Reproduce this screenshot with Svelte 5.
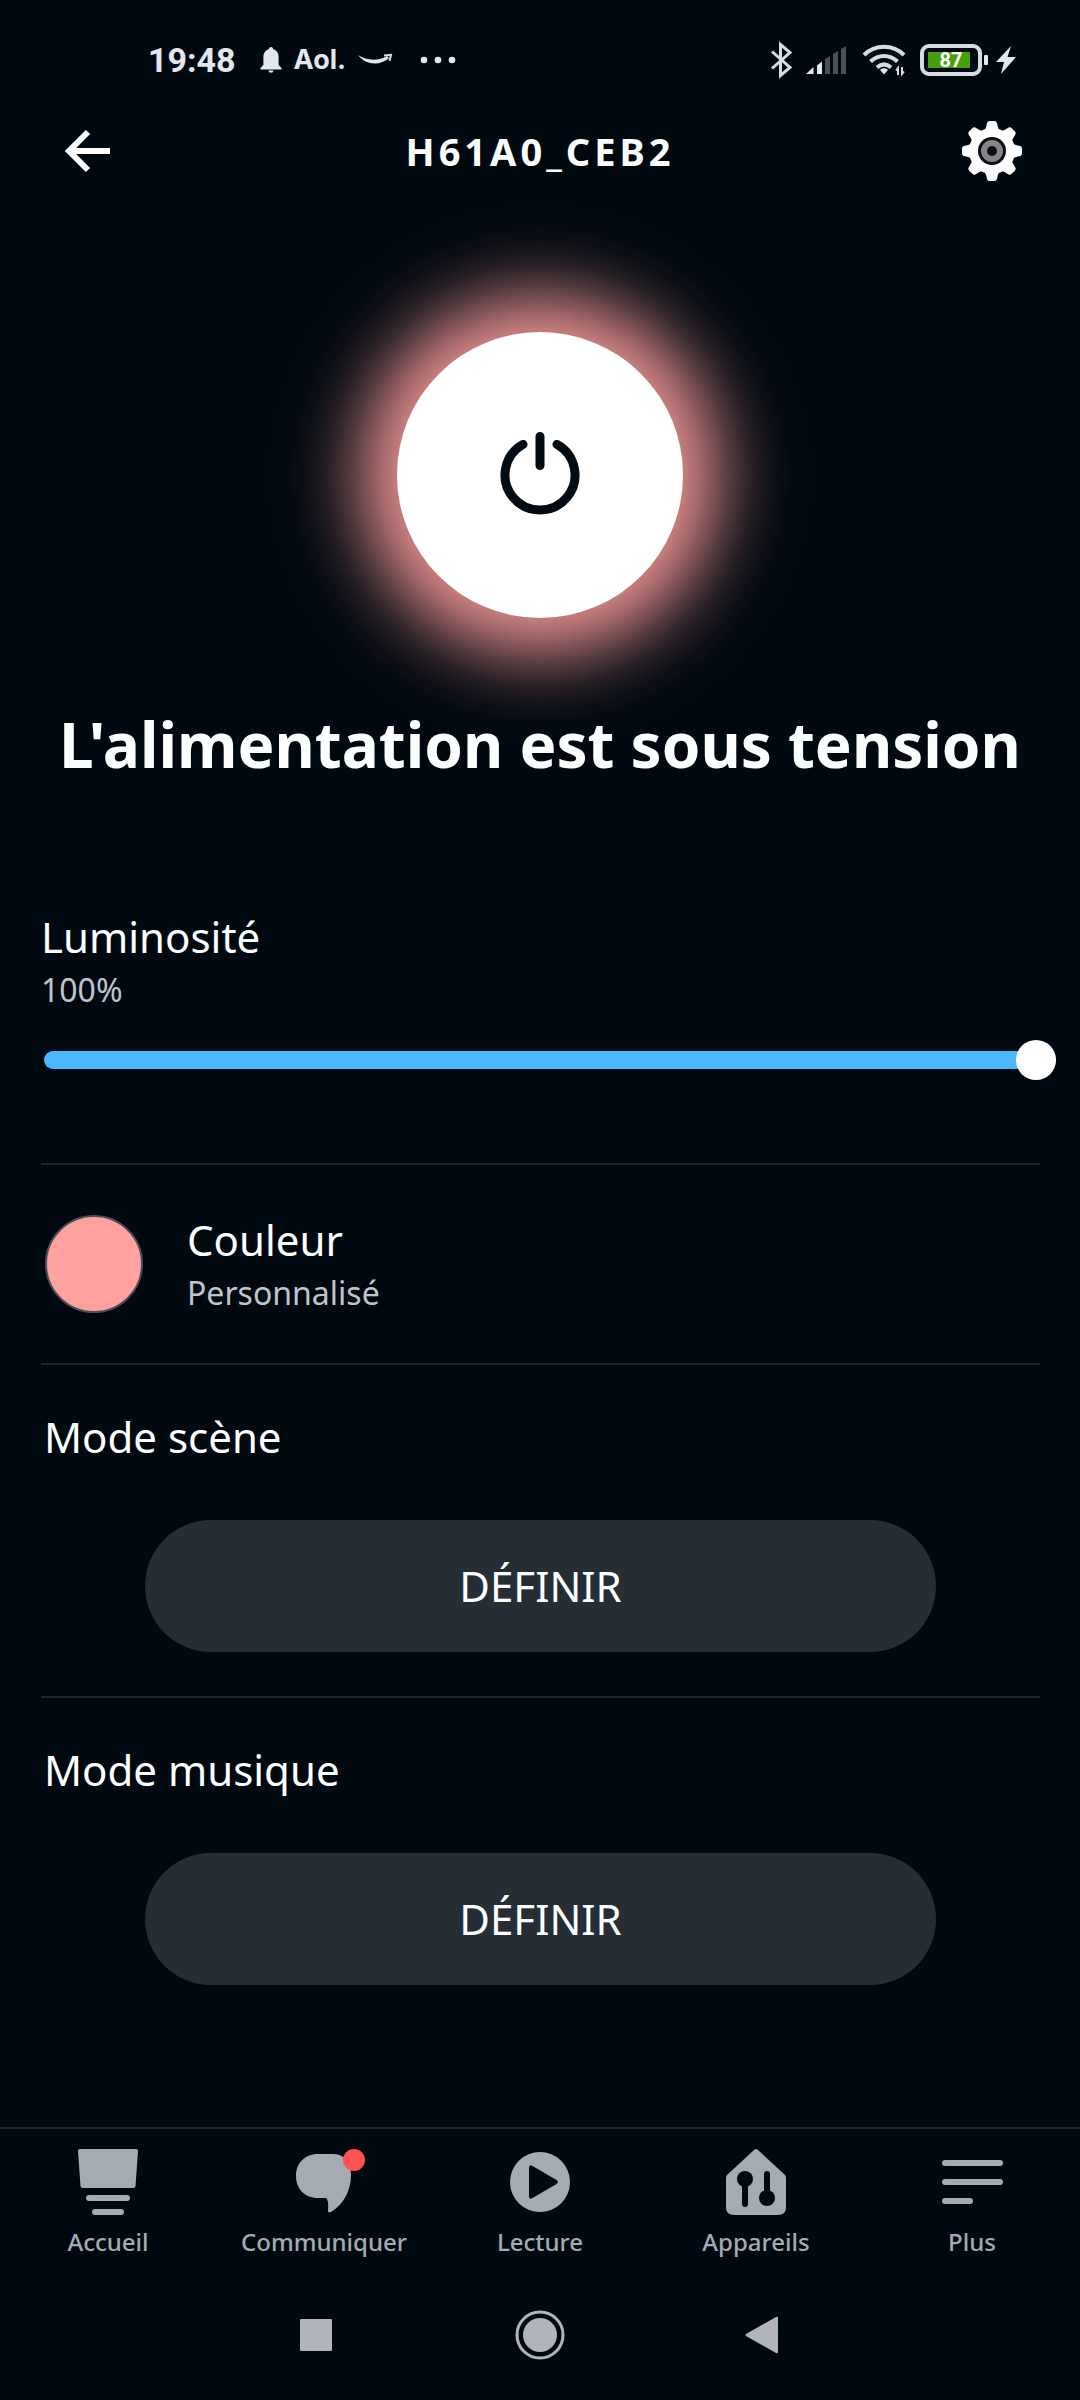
<script lang="ts">
	let brightness = 100;
	let power = true;

	const scenes = ['Mode scène', 'Mode musique'];
	const tabs = [
		{ id: 'home', label: 'Accueil' },
		{ id: 'chat', label: 'Communiquer' },
		{ id: 'play', label: 'Lecture' },
		{ id: 'devices', label: 'Appareils' },
		{ id: 'more', label: 'Plus' }
	];
</script>

<div class="screen">
	<div class="status">
		<div class="left">
			<span class="time">19:48</span>
			<svg class="bell" width="22" height="26" viewBox="0 0 22 26">
				<path
					d="M11 0c1.400 0 2.200 1 2.200 2.300C16.800 3.300 18.600 6.400 18.600 10v8l2.900 3v1.500H.5V21l2.900-3v-8c0-3.600 1.800-6.700 5.400-7.700C8.800 1 9.600 0 11 0zM8.500 23.500h5a2.500 2.300 0 0 1-5 0z"
				/>
			</svg>
			<span class="aol">Aol.</span>
			<svg class="smile" width="34" height="12" viewBox="0 0 34 12">
				<path d="M0 1c8 5.500 20 6.500 29 1l2 2C22 12 8 11.500 0 1z" />
				<path class="tip" d="M26 1.500l7-.700-1.500 6" />
			</svg>
			<svg width="36" height="8" viewBox="0 0 36 8">
				<circle cx="4" cy="4" r="3.300" />
				<circle cx="18" cy="4" r="3.300" />
				<circle cx="32" cy="4" r="3.300" />
			</svg>
		</div>
		<div class="right">
			<svg width="22" height="34" viewBox="0 0 22 34">
				<path class="line" d="M2 8.500l18 16-9.500 8V1.500l9.500 8-18 16" />
			</svg>
			<svg class="signal" width="42" height="30" viewBox="0 0 42 30">
				<path d="M0 29l7.500-7v7zM11 20.500l5-4V29h-5z" />
				<path class="dim" d="M19 14l5-3v18h-5zM27 9l5-3v23h-5zM35 4l5-3v28h-5z" />
			</svg>
			<svg class="wifi" width="44" height="32" viewBox="0 0 44 32">
				<path class="wave" d="M2 11c11-11 29-11 40 0M8.500 17.500c8-7.500 19-7.500 27 0M15 23.500c4.500-4 9.500-4 14 0" />
				<path d="M18 26c2-2.400 6-2.400 8 0l-4 4.500z" />
				<path class="data" d="M36 31v-7l-2 2.500M40 23v7l2-2.500" />
			</svg>
			<div class="battery">
				<svg width="68" height="32" viewBox="0 0 68 32">
					<rect class="case" x="2" y="2" width="58" height="28" rx="7" />
					<rect class="charge" x="8" y="8" width="42" height="16" />
					<rect x="64" y="11" width="4" height="10" rx="1" />
					<text x="31" y="23" text-anchor="middle">87</text>
				</svg>
				<svg width="20" height="30" viewBox="0 0 20 30">
					<path d="M15 1L0 17h8L5 29l15-17h-8.500z" />
				</svg>
			</div>
		</div>
	</div>

	<header>
		<button class="icon" aria-label="Retour">
			<svg width="60" height="60" viewBox="0 0 60 60">
				<path class="arrow" d="M52 30H12M30 11L11 30l19 19" />
			</svg>
		</button>
		<h1>H61A0_CEB2</h1>
		<button class="icon" aria-label="Réglages">
			<svg width="60" height="60" viewBox="-30 -30 60 60">
				<circle class="white" r="23" />
				{#each [0, 45, 90, 135, 180, 225, 270, 315] as angle}
					<path
						class="white"
						transform="rotate({angle})"
						d="M-9.500-19C-6.500-21-5.800-24-5.200-27c.3-2 1.200-3 3-3h4.400c1.800 0 2.700 1 3 3 .6 3 1.300 6 4.300 8z"
					/>
				{/each}
				<circle class="dark" r="14" />
				<circle class="grey" r="11" />
				<circle class="dark" r="5" />
			</svg>
		</button>
	</header>

	<main>
		<button class="power" aria-label="Alimentation" aria-pressed={power} on:click={() => (power = !power)}>
			<svg width="80" height="88" viewBox="0 0 80 88">
				<path d="M23 13.400A35 35 0 1 0 57 13.400M40 5.500v29" />
			</svg>
		</button>
		<h2>L'alimentation est sous tension</h2>

		<section class="brightness">
			<label class="title" for="brightness">Luminosité</label>
			<span class="sub">{brightness}%</span>
			<input
				id="brightness"
				type="range"
				min="0"
				max="100"
				bind:value={brightness}
				style="--value: {brightness}%;"
			/>
		</section>

		<section class="color">
			<button>
				<span class="swatch"></span>
				<span class="text">
					<span class="title">Couleur</span>
					<span class="sub">Personnalisé</span>
				</span>
			</button>
		</section>

		{#each scenes as scene}
			<section class="scene">
				<h3 class="title">{scene}</h3>
				<button aria-label="Définir {scene}">DÉFINIR</button>
			</section>
		{/each}
	</main>

	<nav class="tabs">
		{#each tabs as tab}
			<a href="#{tab.id}">
				<svg width="72" height="72" viewBox="0 0 72 72">
					{#if tab.id === 'home'}
						<path d="M8 3h56q2 0 2 2l-2.500 35q0 2-2 2h-51q-2 0-2-2L6 5q0-2 2-2z" />
						<rect x="14" y="49" width="44" height="6" rx="3" />
						<rect x="20" y="63" width="32" height="6" rx="3" />
					{:else if tab.id === 'chat'}
						<path
							d="M30 8h15c10 0 18 7 18 21 0 16-8 30-20 37-2 1-3 0-3-1 .3-5 .5-9-1-12-.5-1-1-1-2-1h-7C17 52 8 43 8 30S17 8 30 8z"
						/>
						<circle class="badge" cx="66" cy="14" r="11" />
					{:else if tab.id === 'play'}
						<circle cx="36" cy="36" r="30" />
						<path class="cut" d="M25 22q0-4 3.500-2l24 14q3 2 0 4l-24 14q-3.500 2-3.500-2z" />
					{:else if tab.id === 'devices'}
						<path
							d="M34 4q2-2 4 0l27 25q1 1 1 3v29q0 8-8 8H14q-8 0-8-8V32q0-2 1-3z"
						/>
						<circle class="cut" cx="25" cy="33" r="8" />
						<rect class="cut" x="22" y="36" width="6" height="25" rx="3" />
						<circle class="cut" cx="47" cy="52" r="8" />
						<rect class="cut" x="44" y="25" width="6" height="25" rx="3" />
					{:else}
						<rect x="6" y="14" width="61" height="6" rx="3" />
						<rect x="6" y="33" width="61" height="6" rx="3" />
						<rect x="6" y="52" width="31" height="6" rx="3" />
					{/if}
				</svg>
				{tab.label}
			</a>
		{/each}
	</nav>

	<div class="system">
		<button aria-label="Applications récentes">
			<svg width="50" height="50" viewBox="0 0 50 50"><rect x="9" y="9" width="32" height="32" rx="1" /></svg>
		</button>
		<button aria-label="Écran d'accueil">
			<svg width="50" height="50" viewBox="0 0 50 50">
				<circle class="ring" cx="25" cy="25" r="23" />
				<circle cx="25" cy="25" r="17" />
			</svg>
		</button>
		<button aria-label="Précédent">
			<svg width="50" height="50" viewBox="0 0 50 50"><path d="M7 24L37 7q2-1 2 1v34q0 2-2 1L7 26q-1-1 0-2z" /></svg>
		</button>
	</div>
</div>

<style>
	:global(body) {
		background-color: #010910;
	}
	.screen {
		min-height: 100vh;
		display: flex;
		flex-direction: column;
		background-color: #010910;
		color: #fcffff;
		font-family: 'Noto Sans', 'Open Sans', sans-serif;
	}
	svg {
		display: block;
		flex-shrink: 0;
		overflow: visible;
	}
	button {
		padding: 0;
		border: none;
		background: none;
		color: inherit;
		font: inherit;
		cursor: pointer;
	}
	h1,
	h2,
	h3 {
		margin: 0;
	}

	/* status bar */
	.status {
		height: 120px;
		padding: 0 64px 0 148px;
		display: flex;
		justify-content: space-between;
		align-items: center;
		fill: #e4e7ee;
		color: #e4e7ee;
	}
	.left,
	.right,
	.battery {
		display: flex;
		align-items: center;
	}
	.left {
		gap: 12px;
	}
	.right {
		gap: 14px;
	}
	.battery {
		gap: 8px;
	}
	.time {
		margin-right: 12px;
		font: 700 34px/40px Roboto, sans-serif;
	}
	.aol {
		font: 700 27px/32px Inter, sans-serif;
	}
	.smile {
		margin-right: 16px;
	}
	.tip,
	.line,
	.wave,
	.data,
	.case {
		fill: none;
		stroke: #d9dce2;
		stroke-width: 2;
	}
	.line {
		stroke-width: 3;
	}
	.wave {
		stroke-width: 4;
	}
	.case {
		stroke-width: 4;
	}
	.dim {
		fill: #4b5056;
	}
	.charge {
		fill: #46a00e;
	}
	.status text {
		fill: #fff;
		font: 700 20px Roboto, sans-serif;
	}

	/* app bar */
	header {
		min-height: 62px;
		padding: 0 58px;
		display: flex;
		justify-content: space-between;
		align-items: center;
	}
	h1 {
		font-size: 38px;
		line-height: 50px;
		letter-spacing: 4px;
	}
	.arrow {
		fill: none;
		stroke: #fff;
		stroke-width: 6;
	}
	.white {
		fill: #fff;
	}
	.dark {
		fill: #0a1016;
	}
	.grey {
		fill: #83878b;
	}

	main {
		display: flex;
		flex-direction: column;
	}
	.power {
		width: 286px;
		height: 286px;
		margin: 150px auto 81px;
		display: flex;
		justify-content: center;
		align-items: center;
		border-radius: 50%;
		background-color: #fff;
		box-shadow:
			0 0 72px 34px #ff9f9df0,
			0 0 120px 60px #ffa09d18;
	}
	.power path {
		fill: none;
		stroke: #020a12;
		stroke-width: 9;
		stroke-linecap: round;
	}
	h2 {
		margin-bottom: 119px;
		font-size: 62px;
		line-height: 90px;
		text-align: center;
	}
	section {
		margin: 0 40px 0 41px;
	}
	section + section {
		border-top: 2px solid #1e252c;
	}
	.title {
		display: block;
		font-size: 42px;
		font-weight: 400;
		line-height: 58px;
	}
	.sub {
		display: block;
		font-size: 32px;
		line-height: 48px;
		color: #bfc5cc;
	}

	.brightness {
		padding-bottom: 83px;
	}
	input[type='range'] {
		appearance: none;
		display: block;
		width: calc(100% + 13px);
		height: 40px;
		margin: 26px 0 0 3px;
		background: none;
	}
	input[type='range']::-webkit-slider-runnable-track {
		height: 18px;
		border-radius: 9px;
		background: linear-gradient(to right, #4ab8fe var(--value), #262d35 var(--value));
	}
	input[type='range']::-webkit-slider-thumb {
		appearance: none;
		width: 40px;
		height: 40px;
		margin-top: -11px;
		border-radius: 50%;
		background-color: #fff;
	}

	.color button {
		width: 100%;
		padding: 46px 4px;
		display: flex;
		align-items: center;
		gap: 44px;
		text-align: left;
	}
	.swatch {
		width: 94px;
		height: 94px;
		border: 2px solid #4a4e55;
		border-radius: 50%;
		background-color: #ffa19e;
	}

	.scene {
		padding: 43px 0 44px;
	}
	.scene .title {
		margin-left: 3px;
	}
	.scene button {
		display: block;
		width: calc(100% - 208px);
		height: 132px;
		margin: 54px auto 0;
		padding-bottom: 2px;
		border-radius: 66px;
		background-color: #262d34;
		font-size: 42px;
	}

	/* bottom tabs */
	.tabs {
		margin-top: auto;
		padding: 17px 0 11px;
		display: flex;
		border-top: 2px solid #1e252c;
	}
	.tabs a {
		flex: 1;
		display: flex;
		flex-direction: column;
		align-items: center;
		gap: 7px;
		color: #a5abb2;
		fill: #a5abb2;
		font-size: 24px;
		font-weight: 500;
		line-height: 34px;
		text-decoration: none;
	}
	.cut {
		fill: #010910;
	}
	.badge {
		fill: #ff5354;
	}

	.system {
		height: 130px;
		display: flex;
		justify-content: center;
		align-items: center;
		gap: 112px;
		fill: #b1b5bb;
	}
	.system button {
		width: 112px;
		display: flex;
		justify-content: center;
	}
	.ring {
		fill: none;
		stroke: #b1b5bb;
		stroke-width: 3;
	}
</style>
